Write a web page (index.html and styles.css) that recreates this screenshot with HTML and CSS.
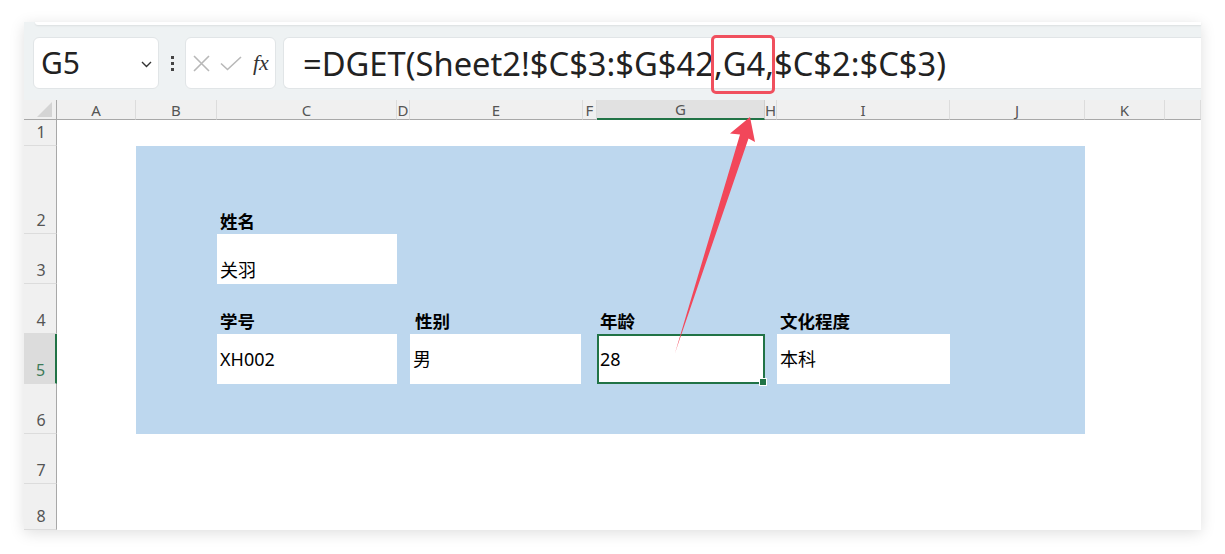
FILE: index.html
```html
<!DOCTYPE html>
<html lang="zh">
<head>
<meta charset="utf-8">
<title>DGET</title>
<link rel="stylesheet" href="styles.css">
</head>
<body>
<div class="window">
  <div class="toolbar">
    <div class="ribbon-edge"></div>
    <div class="bar">
      <div class="namebox">
        <span class="ref">G5</span>
        <svg class="chev" width="11" height="7" viewBox="0 0 11 7"><path d="M1 1 L5.5 5.5 L10 1" fill="none" stroke="#333" stroke-width="1.4"/></svg>
      </div>
      <div class="grip"><i></i><i></i><i></i></div>
      <div class="fxbox">
        <svg width="17" height="17" viewBox="0 0 17 17"><path d="M1 1 L16 16 M16 1 L1 16" stroke="#b8b8b8" stroke-width="1.6" fill="none"/></svg>
        <svg width="22" height="15" viewBox="0 0 22 15"><path d="M1 7.5 L7.5 13.5 L21 1" stroke="#b8b8b8" stroke-width="1.6" fill="none"/></svg>
        <span class="fx">fx</span>
      </div>
      <div class="formula">=DGET(Sheet2!$C$3:$G$42,<span class="hl">G4</span>,$C$2:$C$3)</div>
    </div>
  </div>
  <div class="sheet">
    <div class="corner gr1 gc1"><div class="tri"></div></div>
    <div class="ch gr1 gc2">A</div>
    <div class="ch gr1 gc3">B</div>
    <div class="ch gr1 gc4">C</div>
    <div class="ch gr1 gc5">D</div>
    <div class="ch gr1 gc6">E</div>
    <div class="ch gr1 gc7">F</div>
    <div class="ch sel gr1 gc8">G</div>
    <div class="ch gr1 gc9">H</div>
    <div class="ch gr1 gc10">I</div>
    <div class="ch gr1 gc11">J</div>
    <div class="ch gr1 gc12">K</div>
    <div class="ch gr1 gc13"></div>

    <div class="rh gr2">1</div>
    <div class="rh gr3">2</div>
    <div class="rh gr4">3</div>
    <div class="rh gr5">4</div>
    <div class="rh sel gr6">5</div>
    <div class="rh gr7">6</div>
    <div class="rh gr8">7</div>
    <div class="rh gr9">8</div>

    <div class="band"></div>

    <div class="lbl gr3 gc4">姓名</div>
    <div class="val gr4 gc4">关羽</div>

    <div class="lbl gr5 gc4">学号</div>
    <div class="lbl lbl-e gr5 gc6">性别</div>
    <div class="lbl gr5 gc8">年龄</div>
    <div class="lbl gr5 gc10">文化程度</div>

    <div class="val mid gr6 gc4">XH002</div>
    <div class="val mid narrow gr6 gc6">男</div>
    <div class="val mid sel gr6 gc8">28</div>
    <div class="val mid gr6 gc10">本科</div>
  </div>
</div>
<svg class="arrow" width="1225" height="554" viewBox="0 0 1225 554">
  <polygon points="750,117 755,142 748.5,138.5 675,353 740,134.5 730,133.5" fill="#f2475a"/>
</svg>
</body>
</html>
```

FILE: styles.css
```css
* { box-sizing: border-box; }
html, body { margin: 0; padding: 0; }
body {
  position: relative;
  width: 1225px;
  height: 554px;
  overflow: hidden;
  background: #ffffff;
  font-family: "Noto Sans", "Noto Sans CJK SC", sans-serif;
  color: #111;
}
.window {
  margin: 22px 0 0 24px;
  width: 1177px;
  height: 508px;
  background: #fff;
  box-shadow: 0 3px 14px rgba(0, 0, 0, 0.13);
  display: flex;
  flex-direction: column;
}
.toolbar {
  height: 78px;
  background: #eef2f3;
  display: flex;
  flex-direction: column;
}
.ribbon-edge {
  height: 3px;
  margin-left: 11px;
  background: #fff;
  border-bottom-left-radius: 4px;
  box-shadow: 0 1px 2px rgba(0, 0, 0, 0.08);
}
.bar {
  display: flex;
  align-items: center;
  padding: 12px 0 0 9px;
  height: 64px;
}
.namebox {
  width: 126px;
  height: 52px;
  background: #fff;
  border: 1px solid #e1e5e7;
  border-radius: 6px;
  display: flex;
  align-items: center;
  justify-content: space-between;
  padding: 0 6px 0 7px;
}
.ref {
  font-size: 30px;
  line-height: 1;
  color: #222;
}
.chev { margin-top: 2px; }
.grip {
  width: 26px;
  display: flex;
  flex-direction: column;
  align-items: center;
  gap: 3px;
}
.grip i {
  display: block;
  width: 3px;
  height: 3px;
  background: #444;
}
.fxbox {
  width: 91px;
  height: 52px;
  background: #fff;
  border: 1px solid #e1e5e7;
  border-radius: 6px;
  display: flex;
  align-items: center;
  padding-left: 7px;
  gap: 10px;
}
.fx {
  font-family: "Liberation Serif", "DejaVu Serif", serif;
  font-style: italic;
  font-size: 22px;
  color: #333;
  margin-left: 1px;
}
.formula {
  margin-left: 7px;
  flex: 1;
  height: 52px;
  background: #fff;
  border: 1px solid #e1e5e7;
  border-right: none;
  border-radius: 6px 0 0 6px;
  display: flex;
  align-items: center;
  padding-left: 19px;
  font-size: 32.7px;
  color: #222;
  white-space: nowrap;
}
.hl { position: relative; }
.hl::after {
  content: "";
  position: absolute;
  left: -12px;
  right: -10px;
  top: -6px;
  bottom: -8px;
  border: 3px solid #f0505e;
  border-radius: 5px;
}

.sheet {
  display: grid;
  grid-template-columns: 33px 79px 81px 180px 13px 173px 14px 168px 12px 173px 135px 80px 36px;
  grid-template-rows: 20px 26px 88px 50px 50px 50px 50px 50px 46px;
}
.gr1 { grid-row: 1; }
.gr2 { grid-row: 2; }
.gr3 { grid-row: 3; }
.gr4 { grid-row: 4; }
.gr5 { grid-row: 5; }
.gr6 { grid-row: 6; }
.gr7 { grid-row: 7; }
.gr8 { grid-row: 8; }
.gr9 { grid-row: 9; }
.gc1 { grid-column: 1; }
.gc2 { grid-column: 2; }
.gc3 { grid-column: 3; }
.gc4 { grid-column: 4; }
.gc5 { grid-column: 5; }
.gc6 { grid-column: 6; }
.gc7 { grid-column: 7; }
.gc8 { grid-column: 8; }
.gc9 { grid-column: 9; }
.gc10 { grid-column: 10; }
.gc11 { grid-column: 11; }
.gc12 { grid-column: 12; }
.gc13 { grid-column: 13; }

.corner {
  background: #f0f0f0;
  border-bottom: 1px solid #a8a8a8;
  border-right: 1px solid #a8a8a8;
  display: flex;
  justify-content: flex-end;
  align-items: flex-end;
  padding: 0 4px 2px 0;
}
.tri {
  width: 15px;
  height: 15px;
  background: #d4d4d4;
  clip-path: polygon(100% 0, 100% 100%, 0 100%);
}
.ch {
  background: #f0f0f0;
  border-bottom: 1px solid #a8a8a8;
  border-right: 1px solid #dcdcdc;
  display: flex;
  align-items: center;
  justify-content: center;
  font-size: 15px;
  line-height: 1;
  color: #555;
  padding-top: 1px;
}
.ch.sel {
  background: #e1e1e1;
  border-bottom: 2px solid #217346;
  border-right: 1px solid #cfcfcf;
}
.rh {
  grid-column: 1;
  background: #f0f0f0;
  border-right: 1px solid #a8a8a8;
  border-bottom: 1px solid #dcdcdc;
  display: flex;
  align-items: flex-end;
  justify-content: center;
  padding: 0 0 3px 2px;
  font-size: 16px;
  line-height: 20px;
  color: #555;
}
.rh.sel {
  background: #dcdcdc;
  border-right: 2px solid #217346;
  color: #3d7a58;
}
.band {
  grid-column: 3 / 12;
  grid-row: 3 / 8;
  background: #bdd7ee;
}
.lbl {
  align-self: end;
  padding: 0 0 3px 3px;
  font-size: 17.5px;
  line-height: 20px;
  font-weight: 700;
  color: #000;
}
.lbl-e { padding-left: 5px; }
.val {
  background: #fff;
  display: flex;
  align-items: flex-end;
  padding: 0 0 4px 3px;
  font-size: 18px;
  line-height: 20px;
  color: #000;
}
.val.mid { align-items: center; padding-bottom: 0; }
.val.narrow { margin-right: 2px; }
.val.sel {
  position: relative;
  border: 2px solid #217346;
  padding-left: 1px;
}
.val.sel::after {
  content: "";
  position: absolute;
  right: -4px;
  bottom: -4px;
  width: 6px;
  height: 6px;
  background: #217346;
  border: 1px solid #fff;
}
.arrow {
  position: absolute;
  left: 0;
  top: 0;
  pointer-events: none;
}
```
